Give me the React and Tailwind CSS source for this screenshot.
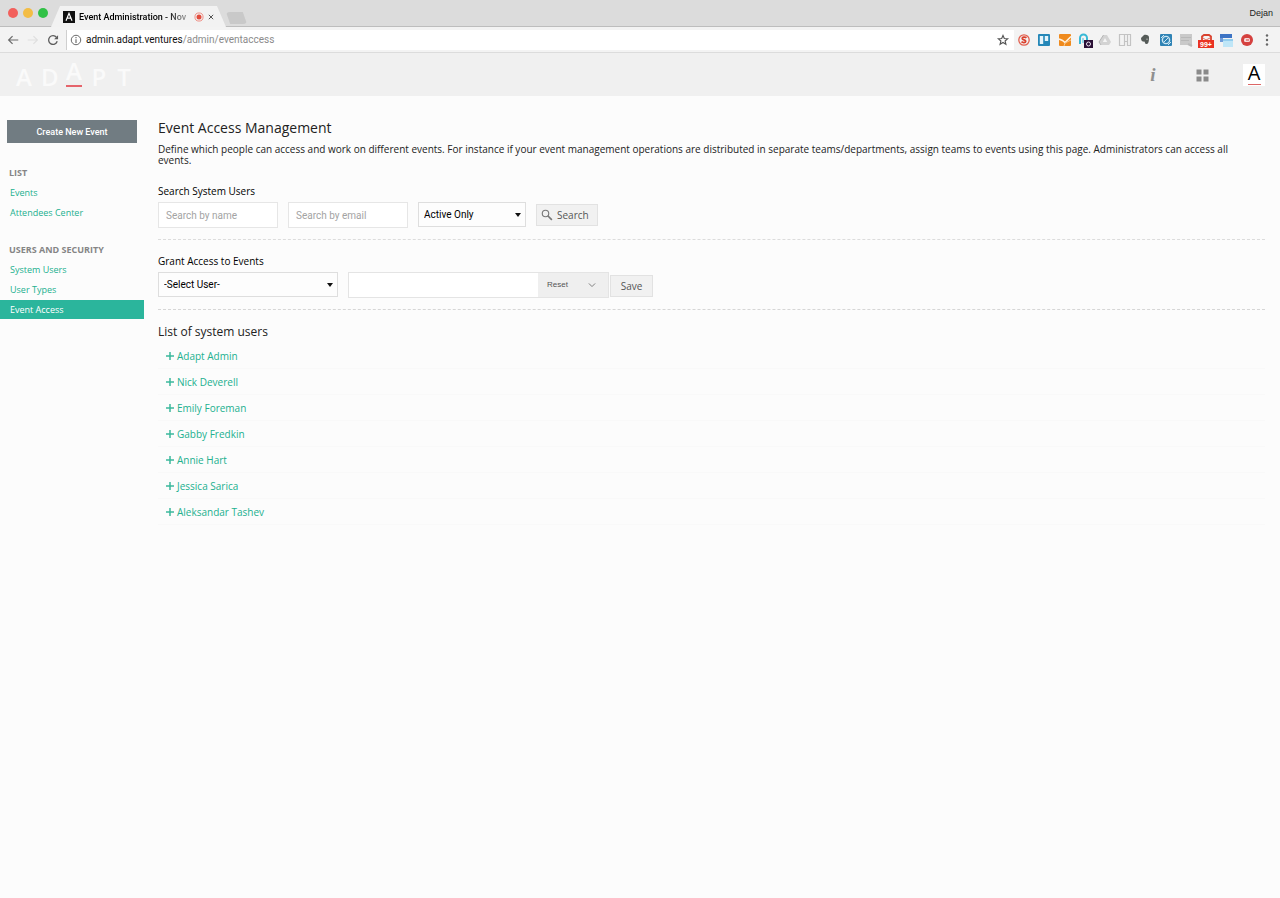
import React from "react";

const users = [
  "Adapt Admin",
  "Nick Deverell",
  "Emily Foreman",
  "Gabby Fredkin",
  "Annie Hart",
  "Jessica Sarica",
  "Aleksandar Tashev",
];

const navGroups = [
  { title: "LIST", links: ["Events", "Attendees Center"] },
  { title: "USERS AND SECURITY", links: ["System Users", "User Types", "Event Access"] },
];

function Svg({ size = "size-4", children }) {
  return (
    <svg viewBox="0 0 16 16" className={`${size} shrink-0`} fill="none" aria-hidden="true">
      {children}
    </svg>
  );
}

const extensions = [
  ["Blocker", (
    <>
      <circle cx="8" cy="8" r="5.200" stroke="#e2604f" strokeWidth="1.300" />
      <path d="M10.500 5.800C9 4.600 6 4.900 6.300 6.700c.3 1.500 3.600 1 3.400 2.700-.2 1.500-3 1.500-4.200.3" stroke="#d9402d" strokeWidth="1.800" />
    </>
  )],
  ["Boards", (
    <>
      <rect x="2" y="2" width="12" height="12" rx="1" fill="#2487b8" />
      <rect x="3.800" y="4" width="3.400" height="8" fill="#e4f3fa" />
      <rect x="8.800" y="4" width="3.400" height="5" fill="#e4f3fa" />
    </>
  )],
  ["Analytics", (
    <>
      <rect x="2" y="2" width="12" height="12" rx="1" fill="#ef8a1d" />
      <path d="M2 7l3.500 1.500L8 10.500l6-6" stroke="#fff2df" strokeWidth="1.600" />
      <path d="M7 14l1-3 6-3" stroke="#f9c58a" />
    </>
  )],
  ["Recorder", (
    <>
      <path d="M3 12V6a3.500 3.500 0 0 1 7 0v2" stroke="#39b9d6" strokeWidth="2" />
      <path d="M6 6v5" stroke="#7ed0e2" strokeWidth="1.500" />
      <rect x="7" y="8" width="9" height="8" fill="#2a1035" />
      <circle cx="11.500" cy="12" r="2" stroke="#e9dff0" />
    </>
  )],
  ["Drive", (
    <>
      <path d="M6.500 3h3.500l4 7-2 3H4L2 10z" fill="#d3d3d3" />
      <path d="M8 6l2.200 4H5.800z" fill="#f4f4f4" />
      <path d="M6.500 3L2 10l2 3" stroke="#b5b5b5" />
    </>
  )],
  ["Layout", (
    <>
      <path d="M2.500 2.500h11v11h-3v-4h-3v4h-5zM7.500 2.500v7M10.500 2.500v7" stroke="#c3c3c3" strokeWidth="1.200" />
    </>
  )],
  ["Notes", (
    <>
      <path d="M4 6l3-3c3-.5 5 .5 5 2.500 0 4-.5 6.500-2.500 6.500-1.500 0-2-1-1.500-2.200C5.500 10 4 9 4 6z" fill="#555b58" />
      <path d="M9.500 7.200h1" stroke="#eee" />
    </>
  )],
  ["Sync", (
    <>
      <rect x="2" y="2" width="12" height="12" rx="1" fill="#2f83b5" />
      <circle cx="8" cy="8" r="3.600" stroke="#c9e5f3" strokeWidth="1.400" />
      <path d="M5.500 10.500l5-5M3 6l3-3M10 13l3-3" stroke="#c9e5f3" />
    </>
  )],
  ["Reader", (
    <>
      <rect x="2" y="2" width="12" height="11" fill="#c9c9c9" />
      <path d="M3 5.500h10M3 8.500h8" stroke="#b8b8b8" />
      <path d="M10 12l4 2" stroke="#bbb" strokeWidth="2" />
    </>
  )],
  ["Mail", (
    <>
      <path d="M4 8V4.500L6 3h5l2 1.500V8" stroke="#d9422e" strokeWidth="1.800" />
      <path d="M5 6l3 2 4-2" stroke="#e56a5a" />
      <rect x="0" y="8" width="16" height="8" fill="#ea3323" />
      <text x="8" y="14.500" textAnchor="middle" fontSize="7" fontWeight="700" fontFamily="Liberation Sans" fill="#fff">99+</text>
    </>
  )],
  ["Windows", (
    <>
      <rect x="2" y="2" width="12" height="4" fill="#3c73c4" />
      <rect x="2" y="6" width="3" height="4" fill="#6f9bd9" />
      <rect x="5" y="7" width="10" height="8" fill="#bfe6f7" />
      <rect x="5" y="7" width="10" height="2" fill="#93cdee" />
    </>
  )],
  ["Stop", (
    <>
      <circle cx="8" cy="8" r="6" fill="#d5413f" />
      <rect x="5" y="6" width="6" height="4" rx="1.500" fill="#f7dada" />
      <path d="M7 8h3" stroke="#d5413f" />
    </>
  )],
];

function BrowserChrome() {
  return (
    <div className="font-['Liberation_Sans',sans-serif]">
      <div className="flex h-[27px] items-end border-b border-[#bdbdbd] bg-[#dcdcdc] pl-2">
        <div className="flex h-[27px] items-center gap-[5px]">
          <span className="size-[10px] rounded-full bg-[#f2605c]" />
          <span className="size-[10px] rounded-full bg-[#f3bd45]" />
          <span className="size-[10px] rounded-full bg-[#31c146]" />
        </div>
        <div className="-mb-px ml-[3px] flex h-[21px] w-[175px] items-center bg-[#f2f2f2] pl-[12px] [clip-path:polygon(0_100%,9px_0,166px_0,100%_100%)]">
          <Svg size="size-3">
            <rect width="16" height="16" fill="#111" />
            <path d="M4 13L8 3l4 10M5.500 9.500h5" stroke="#fff" strokeWidth="1.600" />
          </Svg>
          <span className="ml-1 w-[115px] overflow-hidden whitespace-nowrap bg-linear-to-r from-black from-70% to-[#d4d4d4] bg-clip-text text-[9px] font-medium leading-3 text-transparent font-[Roboto,sans-serif]">
            Event Administration - Nov
          </span>
          <Svg size="size-[10px]">
            <circle cx="8" cy="8" r="6.500" stroke="#ef8a80" strokeWidth="1.500" />
            <circle cx="8" cy="8" r="4" fill="#e24b3c" />
          </Svg>
          <button aria-label="Close tab" className="ml-[2px]">
            <Svg size="size-[10px]">
              <path d="M4.500 4.500l7 7M11.500 4.500l-7 7" stroke="#555" strokeWidth="1.600" />
            </Svg>
          </button>
        </div>
        <button aria-label="New tab" className="mb-[2px] h-3 w-[21px] rounded-sm bg-[#c9c9c9] [clip-path:polygon(0_0,80%_0,100%_100%,20%_100%)]" />
        <span className="ml-auto self-center pr-[7px] text-[9px] leading-3 text-[#222]">Dejan</span>
      </div>
      <div className="flex h-[26px] items-center border-b border-[#dcdcdc] bg-[#f3f3f3] pl-[6px] pr-[3px]">
        <button aria-label="Back"><Svg size="size-[14px]"><path d="M14 8H3M7.500 3.500L3 8l4.500 4.500" stroke="#6b6b6b" strokeWidth="1.400" /></Svg></button>
        <button aria-label="Forward" className="ml-[6px]"><Svg size="size-[14px]"><path d="M2 8h10M8.500 3.500L13 8l-4.500 4.500" stroke="#dfdfdf" strokeWidth="1.400" /></Svg></button>
        <button aria-label="Reload" className="ml-[6px]"><Svg size="size-[14px]"><path d="M12.800 9.500A5 5 0 1 1 12 5" stroke="#5c5c5c" strokeWidth="1.500" /><path d="M13.800 2.500v4.500H9.300z" fill="#5c5c5c" /></Svg></button>
        <div className="ml-[6px] flex h-5 min-w-0 grow items-center border-l border-[#cfcfcf] bg-white pl-[3px] pr-1">
          <Svg size="size-3"><circle cx="8" cy="8" r="6.300" stroke="#666" strokeWidth="1.300" /><path d="M8 7v5M8 4v1.600" stroke="#666" strokeWidth="1.500" /></Svg>
          <span className="ml-1 grow text-[10px] leading-4 text-[#111] font-[Roboto,sans-serif]">admin.adapt.ventures<span className="text-[#8b8b8b]">/admin/eventaccess</span></span>
          <button aria-label="Bookmark"><Svg size="size-[14px]"><path d="M8 2.800l1.500 3.500 3.800.3-2.900 2.500.9 3.700L8 10.800l-3.300 2 .9-3.700-2.900-2.500 3.800-.3z" stroke="#555" strokeWidth="1.300" /></Svg></button>
        </div>
        <div className="grid w-[263px] shrink-0 grid-cols-13 justify-items-center">
          {extensions.map(([name, icon]) => (
            <button key={name} aria-label={name}><Svg>{icon}</Svg></button>
          ))}
          <button aria-label="Menu"><Svg><circle cx="8" cy="3.500" r="1.200" fill="#666" /><circle cx="8" cy="8" r="1.200" fill="#666" /><circle cx="8" cy="12.500" r="1.200" fill="#666" /></Svg></button>
        </div>
      </div>
    </div>
  );
}

function Header() {
  return (
    <header className="flex h-[43px] items-center justify-between bg-[#f0f0f0] pl-4 pr-[15px]">
      <a href="#home" aria-label="Adapt" className="flex items-end gap-[9px] pb-[2px] text-[24px] font-semibold leading-5 text-[#fafafa] font-['Open_Sans',sans-serif]">
        <span className="w-4 text-center">A</span>
        <span className="w-4 text-center">D</span>
        <span className="w-4 border-b-2 border-[#e5646b] pb-1 text-center">A</span>
        <span className="w-4 text-center">P</span>
        <span className="w-4 text-center">T</span>
      </a>
      <div className="flex items-center">
        <button aria-label="Information" className="w-5 text-center text-[19px] italic font-bold leading-5 text-[#8f8f8f] font-['Liberation_Serif',serif]">i</button>
        <button aria-label="Applications" className="ml-[31px]">
          <Svg><path d="M2.500 2.500h5v5h-5zM9.500 2.500h5v5h-5zM2.500 9.500h5v5h-5zM9.500 9.500h5v5h-5z" fill="#8a8a8a" /></Svg>
        </button>
        <button aria-label="Account" className="ml-[33px] flex h-[22px] w-[22px] flex-col items-center bg-white">
          <span className="text-[20px] font-medium leading-[18px] text-black font-['Open_Sans',sans-serif]">A</span>
          <span className="mt-[2px] h-px w-[13px] shrink-0 bg-[#dc6666]" />
        </button>
      </div>
    </header>
  );
}

function Sidebar() {
  return (
    <aside className="w-36 shrink-0 pt-6">
      <button className="mx-[7px] mb-5 flex h-[23px] w-[130px] items-center justify-center bg-[#717c82] text-[9px] font-medium leading-3 text-white font-[Roboto,sans-serif]">
        Create New Event
      </button>
      {navGroups.map((group) => (
        <nav key={group.title} aria-label={group.title} className="mb-[17px]">
          <h2 className="pl-[9px] text-[9px] font-bold leading-5 text-[#858585]">{group.title}</h2>
          {group.links.map((link) => (
            <a
              key={link}
              href="#nav"
              className={link === "Event Access"
                ? "block bg-[#2bb59c] pl-[10px] text-[9px] font-medium leading-[19px] text-white"
                : "block pl-[10px] text-[9px] font-medium leading-5 text-[#22b08f]"}
            >
              {link}
            </a>
          ))}
        </nav>
      ))}
    </aside>
  );
}

function Select({ id, label, option, width }) {
  return (
    <div className={`relative ${width}`}>
      <select id={id} aria-label={label} className="block h-[25px] w-full appearance-none border border-[#dedede] bg-[#fdfdfd] pl-[5px] pb-px text-[10px] text-black font-[Roboto,sans-serif]">
        <option>{option}</option>
      </select>
      <svg viewBox="0 0 6 4" className="pointer-events-none absolute right-[5px] top-[11px] h-1 w-[6px]" aria-hidden="true">
        <path d="M0 0h6L3 4z" fill="#111" />
      </svg>
    </div>
  );
}

const inputClass =
  "h-[26px] w-[120px] border border-[#e6e6e6] bg-white px-[7px] text-[10px] placeholder:text-[#a3a3a3] font-[Roboto,sans-serif]";
const buttonClass =
  "flex h-[22px] items-center border border-[#e2e2e2] bg-[#f1f1f1] text-[10px] leading-3 text-[#555]";

function Main() {
  return (
    <main className="min-w-0 grow pl-[14px] pr-[15px] pt-6 text-[#222]">
      <h1 className="text-[14px] leading-4">Event Access Management</h1>
      <p className="mt-2 pr-3 text-[10px] leading-[11px]">
        Define which people can access and work on different events. For instance if your event management operations are distributed in separate teams/departments, assign teams to events using this page. Administrators can access all events.
      </p>
      <section className="mt-[18px] border-b border-dashed border-[#dcdcdc] pb-[11px]">
        <h2 className="text-[10px] leading-[14px] text-black">Search System Users</h2>
        <form className="mt-1 flex gap-[10px]" onSubmit={(e) => e.preventDefault()}>
          <input aria-label="Search by name" placeholder="Search by name" className={inputClass} />
          <input aria-label="Search by email" placeholder="Search by email" className={inputClass} />
          <Select id="status" label="Status" option="Active Only" width="w-[108px]" />
          <button className={`${buttonClass} mt-[2px] w-[62px] gap-1 pl-1`}>
            <Svg size="size-3"><circle cx="6" cy="6" r="4.300" stroke="#777" strokeWidth="1.500" /><path d="M9 9l5.500 5.500" stroke="#777" strokeWidth="2.200" /></Svg>
            Search
          </button>
        </form>
      </section>
      <section className="mt-[14px] border-b border-dashed border-[#d6d6d6] pb-[11px]">
        <h2 className="text-[10px] leading-[14px] text-black">Grant Access to Events</h2>
        <form className="mt-1 flex" onSubmit={(e) => e.preventDefault()}>
          <Select id="user" label="User" option="-Select User-" width="w-[180px]" />
          <div className="ml-[10px] flex h-[26px] w-[261px] border border-[#e4e4e4]">
            <input aria-label="Events" className="min-w-0 grow bg-white px-2 text-[10px]" />
            <button type="button" className="flex w-[70px] items-center justify-between bg-[#efefef] pl-[9px] pr-[11px] text-[8px] leading-3 text-[#555] font-['Liberation_Sans',sans-serif]">
              Reset
              <Svg size="size-[10px]"><path d="M3 5.500l5 5 5-5" stroke="#777" strokeWidth="1.500" /></Svg>
            </button>
          </div>
          <button className={`${buttonClass} ml-px mt-[3px] w-[43px] justify-center`}>Save</button>
        </form>
      </section>
      <section className="mt-[14px]">
        <h2 className="text-[12px] leading-4">List of system users</h2>
        <ul className="mt-[3px]">
          {users.map((name) => (
            <li key={name} className="h-[26px] border-b border-[#f9f9f9] pl-2">
              <button className="flex h-[26px] items-center gap-[3px] text-[10px] leading-4 text-[#22b08f]">
                <Svg size="size-2"><path d="M8 0v16M0 8h16" stroke="#3bb89c" strokeWidth="3" /></Svg>
                {name}
              </button>
            </li>
          ))}
        </ul>
      </section>
    </main>
  );
}

export default function App() {
  return (
    <div className="min-h-screen bg-[#fcfcfc] font-['Open_Sans',sans-serif]">
      <BrowserChrome />
      <Header />
      <div className="flex">
        <Sidebar />
        <Main />
      </div>
    </div>
  );
}
